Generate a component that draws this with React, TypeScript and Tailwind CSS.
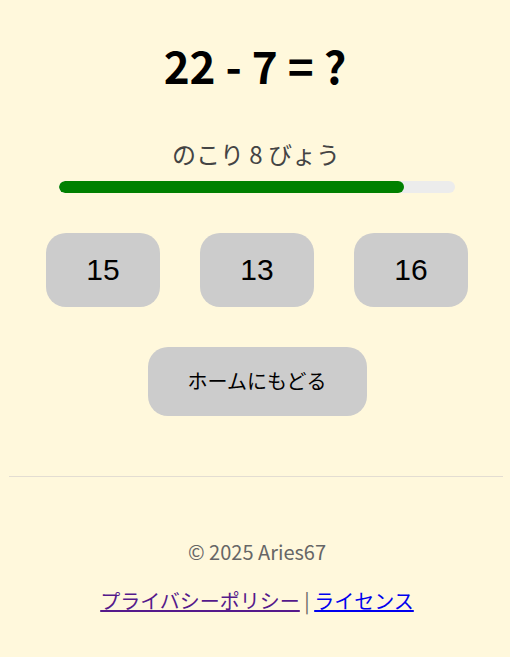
import React from "react";

export default function App() {
  const answers = [15, 13, 16];
  return (
    <div className="min-h-screen w-full bg-[#fff8dc] font-['Noto_Sans_CJK_JP','Noto_Sans',sans-serif] text-black">
      <main className="flex flex-col items-center pl-[4px]">
        <h1 className="mr-[4px] mt-[36px] h-[58px] text-[44px] font-bold leading-[58px]">22 - 7 = ?</h1>
        <p className="mr-[2px] mt-[44px] h-[32px] text-[24px] leading-[32px] text-[#444]">のこり 8 びょう</p>
        <div className="mt-[11px] h-[12px] w-[396px] overflow-hidden rounded-full bg-[#ececec]">
          <div className="h-full rounded-full bg-[#008000]" style={{ width: "87.1%" }} />
        </div>
        <div className="mt-[40px] flex gap-[40px]">
          {answers.map((a) => (
            <button
              key={a}
              className="flex h-[74px] w-[114px] items-center justify-center rounded-[20px] bg-[#cccccc] font-['Liberation_Sans',Arial,sans-serif] text-[30px] leading-none text-black"
            >
              {a}
            </button>
          ))}
        </div>
        <button className="mt-[40px] flex h-[69px] w-[219px] items-center justify-center rounded-[20px] bg-[#cccccc] font-['Liberation_Sans','Noto_Sans_CJK_JP',sans-serif] text-[20px] leading-none text-black">
          ホームにもどる
        </button>
      </main>
      <hr className="ml-[9px] mr-[7px] mt-[60px] border-0 border-t border-[#e3ddd2]" />
      <footer className="flex flex-col items-center pl-[4px] text-[20px] leading-[28px]">
        <p className="mt-[61px] text-[#666]">© 2025 Aries67</p>
        <p className="mt-[21px] text-[#666]">
          <a href="#privacy" className="text-[#551a8b] underline">プライバシーポリシー</a>
          {" | "}
          <a href="#license" className="text-[#0000ee] underline">ライセンス</a>
        </p>
      </footer>
    </div>
  );
}
